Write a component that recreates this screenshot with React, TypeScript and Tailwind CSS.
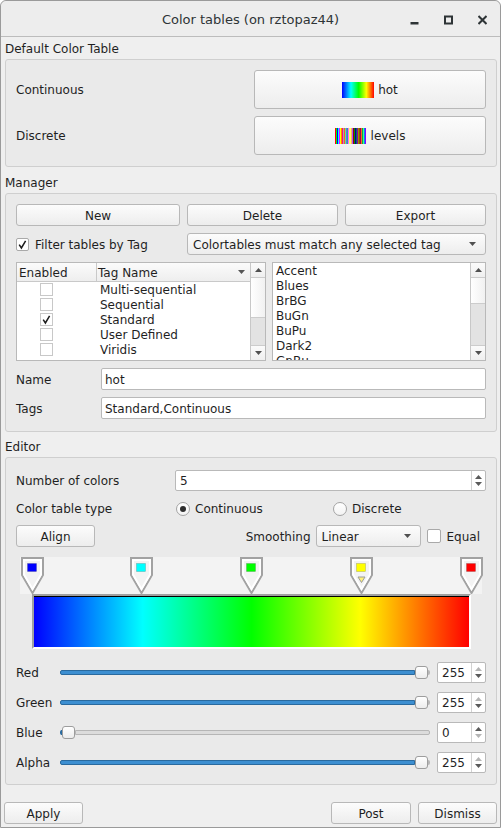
import type { ReactNode } from "react";
import clsx from "clsx";

// VisIt "levels" discrete table, used for the little preview swatch
const LEVELS = [
  "#ff0000", "#00ff00", "#0000ff", "#00ffff", "#ff00ff", "#ffff00", "#ff8700", "#ff0087",
  "#a8a8a8", "#ff4444", "#63ff63", "#6363ff", "#28a5a5", "#ff63ff", "#ffff63", "#ffaa63",
  "#aa4fff", "#960000", "#009600", "#000096", "#006d6d", "#960096", "#969600", "#965400",
  "#a0004f", "#ff681c", "#00aa51", "#44ff7c", "#0082ff", "#8200ff",
];

const TAGS = [
  { name: "Multi-sequential", on: false },
  { name: "Sequential", on: false },
  { name: "Standard", on: true },
  { name: "User Defined", on: false },
  { name: "Viridis", on: false },
];

const TABLES = ["Accent", "Blues", "BrBG", "BuGn", "BuPu", "Dark2", "GnBu"];

const MARKERS = [
  { pos: 0, color: "#0000ff" },
  { pos: 0.25, color: "#00ffff" },
  { pos: 0.5, color: "#00ff00" },
  { pos: 0.75, color: "#ffff00", selected: true },
  { pos: 1, color: "#ff0000" },
];

const SLIDERS = [
  { label: "Red", value: 255 },
  { label: "Green", value: 255 },
  { label: "Blue", value: 0 },
  { label: "Alpha", value: 255 },
];

const BAR_LEFT = 12; // bar start inside the marker strip
const BAR_WIDTH = 439;

function Tri({ up = false, className }: { up?: boolean; className?: string }) {
  return (
    <svg width="7" height="4" viewBox="0 0 7 4" className={className}>
      <path d={up ? "M0 4h7L3.5 0z" : "M0 0h7L3.5 4z"} fill="currentColor" />
    </svg>
  );
}

function Button({ children, className }: { children: ReactNode; className?: string }) {
  return (
    <div
      className={clsx(
        "flex items-center justify-center rounded-[3px] border border-[#b8b8b8] bg-gradient-to-b from-[#fcfcfc] to-[#ededed]",
        className,
      )}
    >
      {children}
    </div>
  );
}

function Combo({ text, className }: { text: string; className?: string }) {
  return (
    <div
      className={clsx(
        "h-[22px] flex items-center rounded-[3px] border border-[#b8b8b8] bg-gradient-to-b from-[#fcfcfc] to-[#ededed] pl-[5px] pr-[9px]",
        className,
      )}
    >
      <span className="flex-1 whitespace-nowrap">{text}</span>
      <Tri className="text-[#505050]" />
    </div>
  );
}

function Check({ checked = false, flat = false }: { checked?: boolean; flat?: boolean }) {
  return (
    <div
      className={clsx(
        "w-[13px] h-[13px] shrink-0 bg-white flex items-center justify-center",
        flat ? "border border-[#c8c8c8]" : "border border-[#a9a9a9] rounded-[2px]",
      )}
    >
      {checked && (
        <svg width="11" height="11" viewBox="0 0 11 11">
          <path d="M2.2 5.6 L4.4 9 L8.6 1.8" fill="none" stroke="#1c1c1c" strokeWidth="1.5" />
        </svg>
      )}
    </div>
  );
}

function Radio({ on = false }: { on?: boolean }) {
  return (
    <div className="w-[14px] h-[14px] shrink-0 rounded-full border border-[#a4a4a4] bg-gradient-to-b from-white to-[#f3f3f3] flex items-center justify-center">
      {on && <div className="w-[6px] h-[6px] rounded-full bg-[#2e2e2e]" />}
    </div>
  );
}

function Input({ value, className }: { value: string; className?: string }) {
  return (
    <div
      className={clsx(
        "h-[22px] flex items-center rounded-[2px] border border-[#b9b9b9] bg-white pl-[3px]",
        className,
      )}
    >
      <span>{value}</span>
    </div>
  );
}

function SpinBox({
  value,
  className,
  upOff = false,
  downOff = false,
}: {
  value: string;
  className?: string;
  upOff?: boolean;
  downOff?: boolean;
}) {
  return (
    <div
      className={clsx(
        "h-[21px] flex rounded-[2px] border border-[#b9b9b9] bg-white",
        className,
      )}
    >
      <div className="flex-1 flex items-center pl-[4px]">
        <span>{value}</span>
      </div>
      <div className="w-[14px] border-l border-[#d2d2d2] flex flex-col items-center justify-center gap-[3px]">
        <Tri up className={upOff ? "text-[#b4b4b4]" : "text-[#5a5a5a]"} />
        <Tri className={downOff ? "text-[#b4b4b4]" : "text-[#5a5a5a]"} />
      </div>
    </div>
  );
}

function ScrollBar({ handleClass }: { handleClass: string }) {
  return (
    <div className="w-[15px] h-full flex flex-col border-l border-[#c8c8c8] bg-[#e3e3e3]">
      <div className="h-[15px] shrink-0 flex items-center justify-center border-b border-[#cccccc] bg-gradient-to-b from-[#fbfbfb] to-[#efefef] text-[#505050]">
        <Tri up />
      </div>
      <div className={clsx("shrink-0 border-b border-[#cccccc] bg-gradient-to-r from-[#ffffff] to-[#f1f1f1]", handleClass)} />
      <div className="flex-1" />
      <div className="h-[15px] shrink-0 flex items-center justify-center border-t border-[#cccccc] bg-gradient-to-b from-[#fbfbfb] to-[#efefef] text-[#505050]">
        <Tri />
      </div>
    </div>
  );
}

function Frame({ children, className }: { children: ReactNode; className?: string }) {
  return (
    <div
      className={clsx(
        "ml-[4px] mr-[3px] shrink-0 flex flex-col rounded-[3px] border border-[#cfcfcf] bg-[#eaeaea] px-[10px]",
        className,
      )}
    >
      {children}
    </div>
  );
}

function Marker({ color, selected }: { color: string; selected?: boolean }) {
  return (
    <svg width="23" height="37" viewBox="0 0 23 37">
      <path d="M1 1H22V18L11.5 36L1 18Z" fill="#f3f3f3" stroke="#a2a2a2" strokeWidth="2" />
      <path d="M3 3H20V17.5L11.5 32L3 17.5Z" fill="none" stroke="#ffffff" strokeWidth="2" />
      <rect x="6.5" y="6.5" width="9" height="8" fill={color} stroke="#00000040" strokeWidth="0.6" />
      {selected && (
        <path d="M8 20H15L11.5 25.5Z" fill="#fff27a" stroke="#9c9c9c" strokeWidth="1" />
      )}
    </svg>
  );
}

function Slider({ value }: { value: number }) {
  return (
    <div className="flex-1 h-[14px] flex items-center">
      <div
        className="h-[5px] rounded-l-[2px] border border-[#2a6a9e] bg-[#3d8fd1]"
        style={{ flexGrow: value }}
      />
      <div className="w-[13px] h-[13px] shrink-0 rounded-[3px] border border-[#9d9d9d] bg-gradient-to-b from-white to-[#ececec]" />
      <div
        className="h-[5px] rounded-r-[2px] border border-[#b6b6b6] bg-[#dcdcdc]"
        style={{ flexGrow: 255 - value }}
      />
    </div>
  );
}

function TitleBar() {
  return (
    <div className="h-[36px] shrink-0 relative flex items-center justify-center border-b border-[#bcbcbc] bg-[#ededed] rounded-t-[6px]">
      <span className="text-[13px] text-[#2e3436]">Color tables (on rztopaz44)</span>
      <div className="absolute right-[13px] top-[14px] flex items-start gap-[25px] text-[#2e3436]">
        <svg width="9" height="10" viewBox="0 0 9 10">
          <rect x="0.5" y="7" width="8" height="2.5" fill="currentColor" />
        </svg>
        <svg width="9" height="10" viewBox="0 0 9 10">
          <rect x="1" y="1.5" width="7" height="7" fill="none" stroke="currentColor" strokeWidth="2" />
        </svg>
        <svg width="9" height="10" viewBox="0 0 9 10">
          <path d="M0.5 1L8.5 9M8.5 1L0.5 9" stroke="currentColor" strokeWidth="2" />
        </svg>
      </div>
    </div>
  );
}

export default function App() {
  return (
    <div className="w-[501px] h-[828px] flex flex-col overflow-hidden rounded-t-[6px] border border-[#9a9a9a] bg-[#efefef] font-['DejaVu_Sans',sans-serif] text-[12px] leading-[15px] text-[#1f1f1f] [&_span]:pt-[2px]">
      <TitleBar />

      {/* Default color table */}
      <div className="h-[22px] shrink-0 flex items-center pl-[4px]">
        <span>Default Color Table</span>
      </div>
      <Frame className="h-[108px] pt-[10px] gap-[7px]">
        <div className="h-[39px] flex items-center">
          <span className="flex-1">Continuous</span>
          <Button className="w-[232px] h-[39px] gap-[4px]">
            <div className="w-[32px] h-[16px] bg-[linear-gradient(to_right,#0000ff,#00ffff_28%,#00ff00_52%,#ffff00_76%,#ff0000)]" />
            <span>hot</span>
          </Button>
        </div>
        <div className="h-[39px] flex items-center">
          <span className="flex-1">Discrete</span>
          <Button className="w-[232px] h-[39px] gap-[4px]">
            <div className="w-[32px] h-[16px] flex">
              {LEVELS.map((c, i) => (
                <div key={i} className="flex-1" style={{ backgroundColor: c }} />
              ))}
            </div>
            <span>levels</span>
          </Button>
        </div>
      </Frame>

      {/* Manager */}
      <div className="h-[26px] shrink-0 flex items-center pt-[4px] pl-[4px]">
        <span>Manager</span>
      </div>
      <Frame className="h-[239px] pt-[10px] gap-[7px]">
        <div className="flex gap-[7px]">
          <Button className="w-[164px] h-[22px]"><span>New</span></Button>
          <Button className="w-[151px] h-[22px]"><span>Delete</span></Button>
          <Button className="flex-1 h-[22px]"><span>Export</span></Button>
        </div>
        <div className="flex items-center">
          <div className="w-[171px] flex items-center gap-[6px]">
            <Check checked />
            <span>Filter tables by Tag</span>
          </div>
          <Combo text="Colortables must match any selected tag" className="flex-1" />
        </div>
        <div className="h-[99px] flex gap-[6px]">
          {/* tag table */}
          <div className="w-[250px] flex border border-[#b9b9b9] bg-white overflow-hidden">
            <div className="flex-1 flex flex-col">
              <div className="h-[19px] shrink-0 flex border-b border-[#c9c9c9] bg-gradient-to-b from-[#fbfbfb] to-[#eeeeee]">
                <div className="w-[80px] flex items-center pl-[2px] border-r border-[#c9c9c9]">
                  <span>Enabled</span>
                </div>
                <div className="flex-1 flex items-center pl-[1px] pr-[5px]">
                  <span className="flex-1">Tag Name</span>
                  <Tri className="text-[#555555]" />
                </div>
              </div>
              {TAGS.map((t) => (
                <div key={t.name} className="h-[15px] shrink-0 flex items-center">
                  <div className="w-[80px] pl-[23px]">
                    <Check checked={t.on} flat />
                  </div>
                  <span className="pl-[3px]">{t.name}</span>
                </div>
              ))}
            </div>
            <ScrollBar handleClass="h-[40px]" />
          </div>
          {/* color table list */}
          <div className="flex-1 flex border border-[#b9b9b9] bg-white overflow-hidden">
            <div className="flex-1 flex flex-col pl-[3px]">
              {TABLES.map((t) => (
                <div key={t} className="h-[15px] shrink-0 flex items-center">
                  <span>{t}</span>
                </div>
              ))}
            </div>
            <ScrollBar handleClass="h-[26px]" />
          </div>
        </div>
        <div className="flex items-center">
          <span className="w-[85px]">Name</span>
          <Input value="hot" className="flex-1" />
        </div>
        <div className="flex items-center">
          <span className="w-[85px]">Tags</span>
          <Input value="Standard,Continuous" className="flex-1" />
        </div>
      </Frame>

      {/* Editor */}
      <div className="h-[25px] shrink-0 flex items-center pt-[3px] pl-[4px]">
        <span>Editor</span>
      </div>
      <Frame className="h-[328px] pt-[12px]">
        <div className="flex items-center">
          <span className="w-[159px]">Number of colors</span>
          <SpinBox value="5" className="flex-1" />
        </div>
        <div className="h-[21px] mt-[7px] flex items-center">
          <span className="w-[160px]">Color table type</span>
          <div className="w-[157px] flex items-center gap-[5px]">
            <Radio on />
            <span>Continuous</span>
          </div>
          <div className="flex items-center gap-[5px]">
            <Radio />
            <span>Discrete</span>
          </div>
        </div>
        <div className="h-[22px] mt-[6px] flex items-center">
          <Button className="w-[79px] h-[22px]"><span>Align</span></Button>
          <span className="ml-auto mr-[5px]">Smoothing</span>
          <Combo text="Linear" className="w-[105px]" />
          <div className="ml-[6px] mr-[6px] flex items-center gap-[6px]">
            <div className="w-[14px] h-[14px] rounded-[2px] border border-[#a9a9a9] bg-white" />
            <span>Equal</span>
          </div>
        </div>

        {/* marker strip */}
        <div className="mt-[10px] ml-[4px] w-[462px] h-[37px] shrink-0 relative bg-[#f3f3f3]">
          {MARKERS.map((m) => (
            <div
              key={m.pos}
              className="absolute top-0"
              style={{ left: BAR_LEFT + m.pos * BAR_WIDTH - 11.5 }}
            >
              <Marker color={m.color} selected={m.selected} />
            </div>
          ))}
        </div>
        {/* gradient bar */}
        <div className="ml-[16px] w-[439px] h-[55px] shrink-0 border-t-2 border-l-2 border-r-2 border-b-2 border-t-[#a0a0a0] border-l-[#a0a0a0] border-r-white border-b-white">
          <div className="h-full border-t border-black bg-[linear-gradient(to_right,#0000ff,#00ffff_25%,#00ff00_50%,#ffff00_75%,#ff0000)]" />
        </div>

        <div className="mt-[13px] flex flex-col gap-[9px]">
          {SLIDERS.map((s) => (
            <div key={s.label} className="h-[21px] flex items-center">
              <span className="w-[44px]">{s.label}</span>
              <Slider value={s.value} />
              <SpinBox
                value={String(s.value)}
                className="w-[49px] ml-[7px]"
                upOff={s.value === 255}
                downOff={s.value === 0}
              />
            </div>
          ))}
        </div>
      </Frame>

      {/* dialog buttons */}
      <div className="h-[42px] shrink-0 flex gap-[7px] pt-[17px] px-[3px]">
        <Button className="w-[79px] h-[22px]"><span>Apply</span></Button>
        <div className="flex-1" />
        <Button className="w-[80px] h-[22px]"><span>Post</span></Button>
        <Button className="w-[79px] h-[22px]"><span>Dismiss</span></Button>
      </div>
    </div>
  );
}
